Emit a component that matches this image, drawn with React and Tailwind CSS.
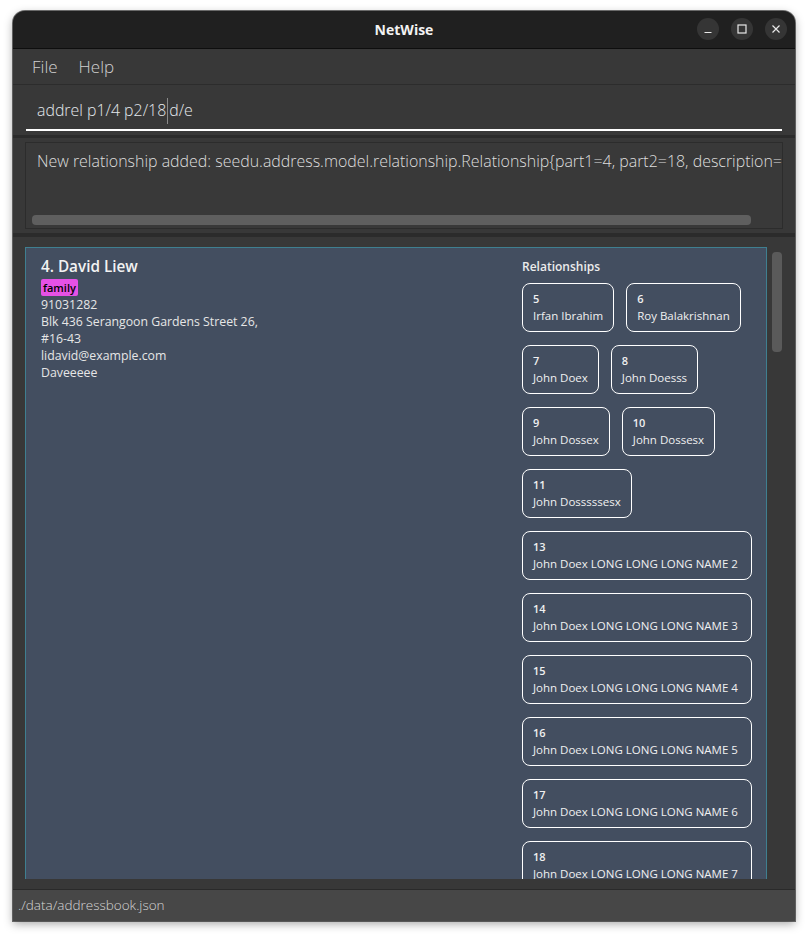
import React from "react";

const F = { fontFamily: '"Open Sans", "Noto Sans", sans-serif' };

function Card({ n, name, wide }) {
  return (
    <div
      className={`border border-white rounded-[8px] h-[49px] px-[10px] pt-[7px] text-[#f0f0f0] ${wide ? "w-[230px]" : ""}`}
    >
      <div className="text-[11px] leading-[16px] font-semibold">{n}</div>
      <div className="text-[11.5px] leading-[18px] whitespace-nowrap">{name}</div>
    </div>
  );
}

const rows = [
  [[5, "Irfan Ibrahim"], [6, "Roy Balakrishnan"]],
  [[7, "John Doex"], [8, "John Doesss"]],
  [[9, "John Dossex"], [10, "John Dossesx"]],
  [[11, "John Dosssssesx"]],
];
const longs = [13, 14, 15, 16, 17, 18];

export default function App() {
  return (
    <div className="w-[808px] h-[937px] bg-white pt-[11px] pl-[13px]" style={F}>
      <div className="w-[782px] h-[910px] rounded-t-[12px] overflow-hidden flex flex-col bg-[#383838] shadow-[0_0_0_1px_rgba(0,0,0,0.55),0_3px_10px_rgba(0,0,0,0.35)]">
        {/* title bar */}
        <div className="h-[37px] bg-[#202020] border-b border-[#0e0e0e] box-content flex items-center relative">
          <div className="flex-1 text-center text-[14px] font-bold text-[#f2f2f2]">NetWise</div>
          <div className="absolute right-[8px] top-[7px] flex gap-[12px]">
            <div className="w-[22px] h-[22px] rounded-full bg-[#353535] flex items-center justify-center">
              <svg width="10" height="10" viewBox="0 0 10 10"><path d="M1.5 8.5h7" stroke="#e8e8e8" strokeWidth="1.2" /></svg>
            </div>
            <div className="w-[22px] h-[22px] rounded-full bg-[#353535] flex items-center justify-center">
              <svg width="10" height="10" viewBox="0 0 10 10"><rect x="1" y="1" width="8" height="8" fill="none" stroke="#e8e8e8" strokeWidth="1.2" /></svg>
            </div>
            <div className="w-[22px] h-[22px] rounded-full bg-[#353535] flex items-center justify-center">
              <svg width="10" height="10" viewBox="0 0 10 10"><path d="M1.5 1.5l7 7M8.5 1.5l-7 7" stroke="#e8e8e8" strokeWidth="1.2" /></svg>
            </div>
          </div>
        </div>
        {/* menu bar */}
        <div className="h-[35px] box-content border-b border-[#2c2c2c] flex items-center pl-[19px] gap-[21px] text-[17px] font-light text-[#d0d0d0]">
          <span>File</span>
          <span>Help</span>
        </div>
        {/* command box */}
        <div className="h-[50px] px-[13px] pt-[10px]">
          <div className="h-[36px] border-b-2 border-white flex items-center pb-[2px] pl-[11px] text-[15.9px] font-light text-[#e4e8ec]">
            <span>addrel p1/4 p2/18</span>
            <span className="w-[1px] h-[26px] bg-[#8a8a8a] mx-[1px]"></span>
            <span>d/e</span>
          </div>
        </div>
        <div className="h-[3px] bg-[#2b2b2b]"></div>
        {/* result display */}
        <div className="h-[95px] px-[12px] pt-[4px]">
          <div className="h-[87px] border border-[#2c2c2c] bg-[#393939] flex flex-col overflow-hidden">
            <div className="flex-1 pl-[11px] pt-[7px] text-[15.95px] leading-[22px] font-light text-[#dedede] whitespace-nowrap overflow-hidden">
              New relationship added: seedu.address.model.relationship.Relationship{"{"}part1=4, part2=18, description=
            </div>
            <div className="pl-[6px] pb-[3px]">
              <div className="w-[719px] h-[10px] rounded-[4px] bg-[#5f5f5f]"></div>
            </div>
          </div>
        </div>
        <div className="h-[4px] bg-[#2b2b2b]"></div>
        {/* list */}
        <div className="h-[652px] px-[12px] py-[10px] flex">
          <div className="w-[742px] h-[632px] bg-[#434e60] border-x border-t border-[#3f7f90] overflow-hidden flex">
            <div className="flex-1 pl-[15px] pt-[8px] text-[#e6e6e6]">
              <div className="text-[15.3px] leading-[20px] font-semibold text-[#f2f2f2]">4. David Liew</div>
              <div className="mt-[3px] flex">
                <span className="h-[17px] px-[2px] rounded-[2px] bg-[#e651e6] text-black text-[11px] font-semibold leading-[17px]">family</span>
              </div>
              <div className="text-[12.3px] leading-[17px]">
                <div>91031282</div>
                <div>Blk 436 Serangoon Gardens Street 26,</div>
                <div>#16-43</div>
                <div>lidavid@example.com</div>
                <div>Daveeeee</div>
              </div>
            </div>
            <div className="w-[244px] pr-[14px] pt-[10px]">
              <div className="text-[12px] leading-[18px] font-semibold text-[#ececec] mb-[7px]">Relationships</div>
              <div className="flex flex-col gap-[13px]">
                {rows.map((r, i) => (
                  <div key={i} className="flex gap-[12px]">
                    {r.map(([n, name]) => (
                      <Card key={n} n={n} name={name} />
                    ))}
                  </div>
                ))}
                {longs.map((n, i) => (
                  <Card key={n} n={n} name={`John Doex LONG LONG LONG NAME ${i + 2}`} wide />
                ))}
              </div>
            </div>
          </div>
          <div className="ml-[5px] mt-[5px] w-[10px] h-[100px] rounded-[4px] bg-[#5a5a5a]"></div>
        </div>
        <div className="h-[1px] bg-[#2a2a2a]"></div>
        {/* status bar */}
        <div className="h-[31px] bg-[#474747] flex items-center pl-[5px] text-[13.5px] font-light text-[#d6d6d6]">
          ./data/addressbook.json
        </div>
      </div>
    </div>
  );
}
